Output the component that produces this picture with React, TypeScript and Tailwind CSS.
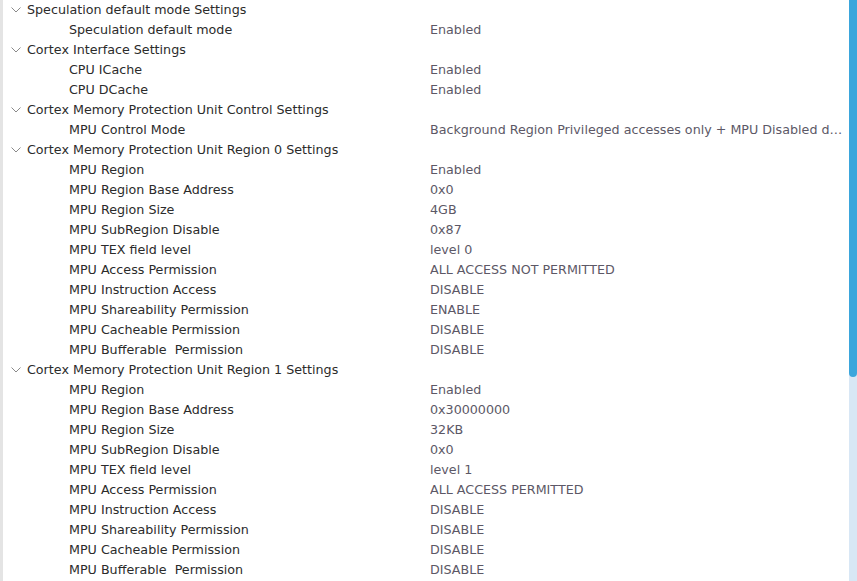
import React from "react";

type Group = { title: string; rows: [string, string][] };

const groups: Group[] = [
  { title: "Speculation default mode Settings", rows: [["Speculation default mode", "Enabled"]] },
  {
    title: "Cortex Interface Settings",
    rows: [
      ["CPU ICache", "Enabled"],
      ["CPU DCache", "Enabled"],
    ],
  },
  {
    title: "Cortex Memory Protection Unit Control Settings",
    rows: [["MPU Control Mode", "Background Region Privileged accesses only + MPU Disabled during hard fault, NMI and FAULTMASK handlers"]],
  },
  {
    title: "Cortex Memory Protection Unit Region 0 Settings",
    rows: [
      ["MPU Region", "Enabled"],
      ["MPU Region Base Address", "0x0"],
      ["MPU Region Size", "4GB"],
      ["MPU SubRegion Disable", "0x87"],
      ["MPU TEX field level", "level 0"],
      ["MPU Access Permission", "ALL ACCESS NOT PERMITTED"],
      ["MPU Instruction Access", "DISABLE"],
      ["MPU Shareability Permission", "ENABLE"],
      ["MPU Cacheable Permission", "DISABLE"],
      ["MPU Bufferable  Permission", "DISABLE"],
    ],
  },
  {
    title: "Cortex Memory Protection Unit Region 1 Settings",
    rows: [
      ["MPU Region", "Enabled"],
      ["MPU Region Base Address", "0x30000000"],
      ["MPU Region Size", "32KB"],
      ["MPU SubRegion Disable", "0x0"],
      ["MPU TEX field level", "level 1"],
      ["MPU Access Permission", "ALL ACCESS PERMITTED"],
      ["MPU Instruction Access", "DISABLE"],
      ["MPU Shareability Permission", "DISABLE"],
      ["MPU Cacheable Permission", "DISABLE"],
      ["MPU Bufferable  Permission", "DISABLE"],
    ],
  },
];

function Chevron() {
  return (
    <svg width="10" height="6" viewBox="0 0 10 6" className="ml-[8px] mr-[6px] shrink-0">
      <path d="M0.5 0.5 L5 5 L9.5 0.5" fill="none" stroke="#8a8a8a" strokeWidth="1" />
    </svg>
  );
}

export default function App() {
  return (
    <div className="flex h-[581px] w-[857px] overflow-hidden bg-white font-['DejaVu_Sans',sans-serif] text-[12.7px]">
      <div className="w-[3px] shrink-0 bg-[#e4e4e4]" />
      <div className="flex min-w-0 flex-1 flex-col">
        {groups.map((g) => (
          <div key={g.title}>
            <div className="flex h-[20px] items-center whitespace-pre text-[#2b2b2b]">
              <Chevron />
              {g.title}
            </div>
            {g.rows.map(([k, v], i) => (
              <div key={i} className="flex h-[20px] items-center">
                <div className="w-[427px] shrink-0 whitespace-pre pl-[66px] text-[#2b2b2b]">{k}</div>
                <div className="min-w-0 flex-1 truncate pr-[4px] text-[#5c5866]">{v}</div>
              </div>
            ))}
          </div>
        ))}
      </div>
      <div className="flex w-[8px] shrink-0 flex-col bg-[#d8e7f5]">
        <div className="h-[377px] rounded-b-[4px] bg-[#3ba6dc]" />
      </div>
    </div>
  );
}
